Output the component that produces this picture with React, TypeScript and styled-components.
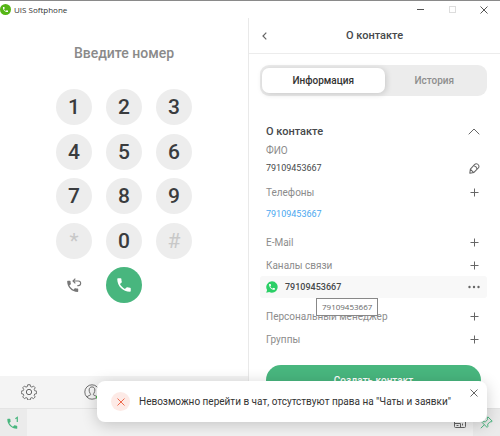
import React from "react";
import styled, { createGlobalStyle, css } from "styled-components";

const GlobalStyle = createGlobalStyle`
  * { box-sizing: border-box; }
  body { margin: 0; background: #fff; }
  button { border: 0; padding: 0; margin: 0; background: none; font: inherit; color: inherit; cursor: pointer; }
  h1, h2, p { margin: 0; font-weight: 500; }
  svg { display: block; flex: none; }
`;

const Window = styled.div`
  position: relative;
  display: flex;
  flex-direction: column;
  height: 100vh;
  overflow: hidden;
  border-top: 1px solid #8a8a8a;
  background: #fff;
  color: #46494b;
  font-family: Roboto, "Liberation Sans", sans-serif;
  font-size: 10px;
`;

const TitleBar = styled.header`
  display: flex;
  align-items: center;
  flex: none;
  height: 17px;
  color: #333;
  font-family: "Open Sans", "Noto Sans", sans-serif;
  font-size: 8px;
`;

const AppName = styled.span`
  flex: 1;
  padding-left: 3px;
`;

const WindowButton = styled.button<{ $muted?: boolean }>`
  display: flex;
  justify-content: center;
  align-items: center;
  width: 32px;
  height: 16px;
  color: ${(p) => (p.$muted ? "#ddd" : "#555")};
`;

const Main = styled.main`
  display: grid;
  grid-template-columns: 249fr 251fr;
  grid-template-rows: 100%;
  flex: 1;
  min-height: 0;
`;

const DialSide = styled.section`
  display: flex;
  flex-direction: column;
  min-width: 0;
  border-right: 1px solid #e9e9e9;
`;

const Dialer = styled.div`
  display: flex;
  flex-direction: column;
  align-items: center;
  flex: 1;
  padding-top: 25px;
`;

const NumberInput = styled.input`
  width: 160px;
  height: 20px;
  margin-bottom: 26px;
  padding: 0;
  border: 0;
  outline: 0;
  background: none;
  font: 500 14px Roboto, sans-serif;
  text-align: center;
  color: #3c3f41;
  &::placeholder { color: #8a8a8a; opacity: 1; }
`;

const Keypad = styled.div`
  display: grid;
  grid-template-columns: repeat(3, 36px);
  column-gap: 14px;
  align-content: space-between;
  height: 214px;
`;

const Key = styled.button<{ $muted?: boolean; $kind?: "plain" | "call" }>`
  display: flex;
  justify-content: center;
  align-items: center;
  width: 36px;
  height: 36px;
  border-radius: 50%;
  background: #ededed;
  color: ${(p) => (p.$muted ? "#c8c8c8" : "#3a3c3e")};
  font-size: 21px;
  font-weight: ${(p) => (p.$muted ? 400 : 500)};
  ${(p) => p.$kind === "plain" && css`background: none; color: #777;`}
  ${(p) => p.$kind === "call" && css`background: #48b67e; color: #fff;`}
`;

const Toolbar = styled.nav`
  display: flex;
  align-items: center;
  gap: 47px;
  flex: none;
  height: 32px;
  padding-left: 21px;
  background: #f4f4f4;
  color: #666;
`;

const ContactSide = styled.section`
  display: flex;
  flex-direction: column;
  min-width: 0;
  overflow: hidden;
`;

const PanelHeader = styled.header`
  display: grid;
  grid-template-columns: 30px 1fr 30px;
  align-items: center;
  flex: none;
  height: 36px;
  border-bottom: 1px solid #ececec;
`;

const PanelTitle = styled.h1`
  font-size: 11px;
  text-align: center;
`;

const IconButton = styled.button`
  display: flex;
  justify-content: center;
  align-items: center;
  width: 14px;
  height: 14px;
  color: #666;
`;

const BackButton = styled(IconButton)`
  justify-self: center;
`;

const Tabs = styled.div`
  display: grid;
  grid-template-columns: 1fr 1fr;
  flex: none;
  height: 31px;
  margin: 11px 13px 0 11px;
  padding: 3px 2px;
  border-radius: 9px;
  background: #ececec;
`;

const Tab = styled.button<{ $active?: boolean }>`
  border-radius: 7px;
  font-weight: 500;
  color: #8e8e8e;
  ${(p) =>
    p.$active &&
    css`
      margin-right: -11px;
      background: #fff;
      color: #333;
      box-shadow: 1px 1px 6px rgba(0, 0, 0, 0.16);
    `}
  ${(p) => !p.$active && css`padding-left: 10px;`}
`;

const Details = styled.div`
  display: flex;
  flex-direction: column;
  flex: none;
  padding: 26px 13px 0 11px;
`;

const Row = styled.div<{ $height: number; $gap?: number }>`
  position: relative;
  display: flex;
  align-items: center;
  justify-content: space-between;
  height: ${(p) => p.$height}px;
  margin-top: ${(p) => p.$gap || 0}px;
  padding: 0 6px;
`;

const SectionTitle = styled.h2`
  font-size: 11px;
`;

const Label = styled.span`
  color: #8c8c8c;
`;

const Value = styled.span`
  font-size: 9px;
`;

const PhoneLink = styled.a`
  font-size: 9px;
  color: #4aa8f0;
  text-decoration: none;
`;

const ChannelRow = styled(Row)`
  gap: 7px;
  border-radius: 3px;
  background: #f8f8f8;
`;

const ChannelNumber = styled.span`
  flex: 1;
  font-size: 9px;
  font-weight: 500;
`;

const Tooltip = styled.div`
  position: absolute;
  z-index: 1;
  top: 22px;
  left: 56px;
  padding: 0 5px;
  border: 1px solid #888;
  background: #fff;
  color: #666;
  font: 8px/16px "Open Sans", "Noto Sans", sans-serif;
`;

const CreateButton = styled.button`
  height: 30px;
  margin: 15px 6px 0;
  border-radius: 15px;
  background: #48b67e;
  color: #fff;
  font-weight: 500;
`;

const Footer = styled.footer`
  display: flex;
  align-items: center;
  flex: none;
  height: 28px;
  border-top: 1px solid #e4e4e4;
  background: #f3f3f3;
`;

const FooterButton = styled.button<{ $tone?: "active" }>`
  display: flex;
  justify-content: center;
  align-items: center;
  width: 27px;
  height: 100%;
  color: #666;
  ${(p) => p.$tone === "active" && css`background: #ebebeb; color: #48b67e;`}
`;

const Spacer = styled.div`
  flex: 1;
`;

const Toast = styled.div`
  position: absolute;
  z-index: 2;
  left: 97px;
  right: 13px;
  bottom: 14px;
  display: flex;
  align-items: center;
  gap: 9px;
  height: 41px;
  padding-left: 14px;
  border-radius: 8px;
  background: #fff;
  color: #333;
  box-shadow: 0 3px 16px rgba(0, 0, 0, 0.2);
`;

const ErrorBadge = styled.span`
  display: flex;
  justify-content: center;
  align-items: center;
  width: 19px;
  height: 19px;
  border-radius: 50%;
  background: #fdeae6;
  color: #ee6a4d;
`;

const ToastText = styled.p`
  flex: 1;
  font-weight: 400;
`;

const ToastClose = styled(IconButton)`
  align-self: flex-start;
  margin: 5px 6px 0 0;
`;

const HANDSET =
  "M6.6 10.8c1.4 2.8 3.8 5.1 6.6 6.6l2.2-2.2c.3-.3.7-.4 1-.2 1.1.4 2.3.6 3.6.6.6 0 1 .4 1 1V20c0 .6-.4 1-1 1C10.6 21 3 13.4 3 4c0-.6.4-1 1-1h3.500c.6 0 1 .4 1 1 0 1.300.2 2.500.6 3.600.1.300 0 .7-.2 1z";

const Handset = ({ size }: { size: number }) => (
  <svg width={size} height={size} viewBox="0 0 24 24" fill="currentColor">
    <path d={HANDSET} />
  </svg>
);

const Cross = ({ size }: { size: number }) => (
  <svg width={size} height={size} viewBox="0 0 8 8" stroke="currentColor" fill="none">
    <path d="M.5.5l7 7M7.500.5l-7 7" />
  </svg>
);

const Plus = () => (
  <svg width="9" height="9" viewBox="0 0 9 9" stroke="currentColor" fill="none">
    <path d="M4.500.5v8M.5 4.500h8" />
  </svg>
);

const AppLogo = () => (
  <svg width="11" height="11" viewBox="0 0 24 24">
    <circle cx="12" cy="12" r="12" fill="#55b516" />
    <g transform="translate(4.500 4.500) scale(.62)">
      <path d={HANDSET} fill="#fff" />
    </g>
  </svg>
);

const Redial = () => (
  <svg width="16" height="16" viewBox="0 0 24 24" fill="none">
    <g transform="translate(-1 3) scale(.92)">
      <path d={HANDSET} fill="currentColor" />
    </g>
    <path d="M11 6h7.500a3.500 3.500 0 0 1 0 7H17M14 2.500L10.500 6 14 9.500" stroke="currentColor" strokeWidth="1.700" />
  </svg>
);

const Gear = () => (
  <svg width="16" height="16" viewBox="0 0 24 24" fill="none" stroke="currentColor" strokeWidth="1.500" strokeLinejoin="round">
    <path d="M10 1.500h4l.6 3 2.200.9 2.600-1.700 2.800 2.800-1.700 2.600.9 2.200 3.100.7v4l-3.100.6-.9 2.200 1.700 2.600-2.800 2.800-2.600-1.700-2.200.9-.6 3h-4l-.6-3-2.200-.9-2.600 1.700-2.800-2.800 1.700-2.600-.9-2.200-3.100-.6v-4l3.100-.7.9-2.200-1.700-2.600 2.800-2.800 2.600 1.700 2.200-.9z" transform="translate(.9 -.3) scale(.92)" />
    <circle cx="12" cy="12" r="4" />
  </svg>
);

const Person = () => (
  <svg width="16" height="16" viewBox="0 0 24 24" fill="none" stroke="currentColor" strokeWidth="1.400">
    <circle cx="12" cy="12" r="10.800" />
    <path d="M4.500 19.500c1.200-2 4.500-2.300 5.300-3.200.5-.7-.2-1.700-.9-2.800-.8-1.300-1.200-3-1.200-4.500 0-2.800 1.700-4.600 4.300-4.600s4.300 1.800 4.300 4.600c0 1.500-.4 3.200-1.200 4.500-.7 1.100-1.400 2.100-.9 2.800.8.9 4.100 1.200 5.300 3.200" />
    <circle cx="21" cy="20" r="3" fill="#44b649" stroke="none" />
  </svg>
);

const Pencil = () => (
  <svg width="11" height="11" viewBox="0 0 20 20" fill="none" stroke="currentColor" strokeWidth="1.900" strokeLinejoin="round">
    <path d="M1.500 18.500l1-7.500 7.500-8c1.600-1.600 3.600-2 5.500-.9 2.600 1.500 3.500 4.400 1.500 6.900l-8 8.200zM2.700 11.500l5.500 5.500M9.500 5.500c2.500.5 4.500 2.500 5 5" />
  </svg>
);

const WhatsApp = () => (
  <svg width="12" height="12" viewBox="0 0 24 24">
    <path d="M12 .5A11.400 11.400 0 0 0 2.200 17.800L.5 23.500l5.900-1.600A11.400 11.400 0 1 0 12 .5z" fill="#2bcf66" />
    <g transform="translate(4.200 4.200) scale(.64)">
      <path d={HANDSET} fill="#fff" />
    </g>
  </svg>
);

const LineCall = () => (
  <svg width="13" height="13" viewBox="0 0 24 24">
    <g transform="translate(-2.500 2) scale(1.020)">
      <path d={HANDSET} fill="currentColor" />
    </g>
    <path d="M15.500 5l3.500-2.500V11" fill="none" stroke="currentColor" strokeWidth="2.200" />
  </svg>
);

const Pin = () => (
  <svg width="13" height="13" viewBox="0 0 24 24" fill="none" stroke="currentColor" strokeWidth="1.800" strokeLinejoin="round">
    <path d="M14.500 1.500l8 8-2 1.500-2-.3-4.200 4.300.2 4.500-1.500 1.500L4 12l1.500-1.500 4.500.2 4.200-4.200-.7-2.500zM8 16.300L1.500 22.500" />
  </svg>
);

const WindowLayout = () => (
  <svg width="12" height="11" viewBox="0 0 12 11" fill="none" stroke="currentColor">
    <rect x=".5" y=".5" width="11" height="10" rx="1" />
    <path d="M.5 6.500h6v4M2.500 8.500h2M8.500 6.500v2" />
  </svg>
);

const KEYS = ["1", "2", "3", "4", "5", "6", "7", "8", "9", "*", "0", "#"];

const AddRow = ({ label, height, gap }: { label: string; height: number; gap?: number }) => (
  <Row $height={height} $gap={gap}>
    <Label>{label}</Label>
    <IconButton aria-label={`Добавить: ${label}`}>
      <Plus />
    </IconButton>
  </Row>
);

export default function App() {
  return (
    <>
      <GlobalStyle />
      <Window>
        <TitleBar>
          <AppLogo />
          <AppName>UIS Softphone</AppName>
          <WindowButton aria-label="Свернуть">
            <svg width="7" height="7" viewBox="0 0 7 7" stroke="currentColor"><path d="M0 3.500h7" /></svg>
          </WindowButton>
          <WindowButton aria-label="Развернуть" $muted>
            <svg width="7" height="7" viewBox="0 0 7 7" stroke="currentColor" fill="none"><rect x=".5" y=".5" width="6" height="6" /></svg>
          </WindowButton>
          <WindowButton aria-label="Закрыть">
            <Cross size={8} />
          </WindowButton>
        </TitleBar>

        <Main>
          <DialSide>
            <Dialer>
              <NumberInput aria-label="Номер" placeholder="Введите номер" />
              <Keypad>
                {KEYS.map((k) => (
                  <Key key={k} $muted={k === "*" || k === "#"}>{k}</Key>
                ))}
                <Key $kind="plain" aria-label="Повторить вызов"><Redial /></Key>
                <Key $kind="call" aria-label="Позвонить"><Handset size={18} /></Key>
              </Keypad>
            </Dialer>
            <Toolbar>
              <button aria-label="Настройки"><Gear /></button>
              <button aria-label="Профиль"><Person /></button>
            </Toolbar>
          </DialSide>

          <ContactSide>
            <PanelHeader>
              <BackButton aria-label="Назад">
                <svg width="5" height="8" viewBox="0 0 5 8" fill="none" stroke="currentColor" strokeWidth="1.200"><path d="M4.300.7L1 4l3.300 3.300" /></svg>
              </BackButton>
              <PanelTitle>О контакте</PanelTitle>
            </PanelHeader>
            <Tabs role="tablist">
              <Tab role="tab" aria-selected="true" $active>Информация</Tab>
              <Tab role="tab" aria-selected="false">История</Tab>
            </Tabs>
            <Details>
              <Row $height={19}>
                <SectionTitle>О контакте</SectionTitle>
                <IconButton aria-label="Скрыть раздел">
                  <svg width="12" height="7" viewBox="0 0 12 7" fill="none" stroke="currentColor"><path d="M.7 6.300L6 1l5.300 5.300" /></svg>
                </IconButton>
              </Row>
              <Row $height={18}><Label>ФИО</Label></Row>
              <Row $height={18}>
                <Value>79109453667</Value>
                <IconButton aria-label="Изменить ФИО"><Pencil /></IconButton>
              </Row>
              <AddRow label="Телефоны" height={24} gap={3} />
              <Row $height={20}><PhoneLink href="tel:79109453667">79109453667</PhoneLink></Row>
              <AddRow label="E-Mail" height={24} gap={6} />
              <AddRow label="Каналы связи" height={22} />
              <ChannelRow $height={22}>
                <WhatsApp />
                <ChannelNumber>79109453667</ChannelNumber>
                <IconButton aria-label="Действия">
                  <svg width="12" height="4" viewBox="0 0 12 4" fill="currentColor"><circle cx="1.500" cy="2" r="1.200" /><circle cx="6" cy="2" r="1.200" /><circle cx="10.500" cy="2" r="1.200" /></svg>
                </IconButton>
                <Tooltip role="tooltip">79109453667</Tooltip>
              </ChannelRow>
              <AddRow label="Персональный менеджер" height={24} gap={6} />
              <AddRow label="Группы" height={22} />
              <CreateButton>Создать контакт</CreateButton>
            </Details>
          </ContactSide>
        </Main>

        <Footer>
          <FooterButton $tone="active" aria-label="Линия 1"><LineCall /></FooterButton>
          <Spacer />
          <FooterButton aria-label="Вид окна"><WindowLayout /></FooterButton>
          <FooterButton $tone="active" aria-label="Закрепить"><Pin /></FooterButton>
        </Footer>

        <Toast role="alert">
          <ErrorBadge><Cross size={8} /></ErrorBadge>
          <ToastText>Невозможно перейти в чат, отсутствуют права на "Чаты и заявки"</ToastText>
          <ToastClose aria-label="Закрыть уведомление"><Cross size={8} /></ToastClose>
        </Toast>
      </Window>
    </>
  );
}
